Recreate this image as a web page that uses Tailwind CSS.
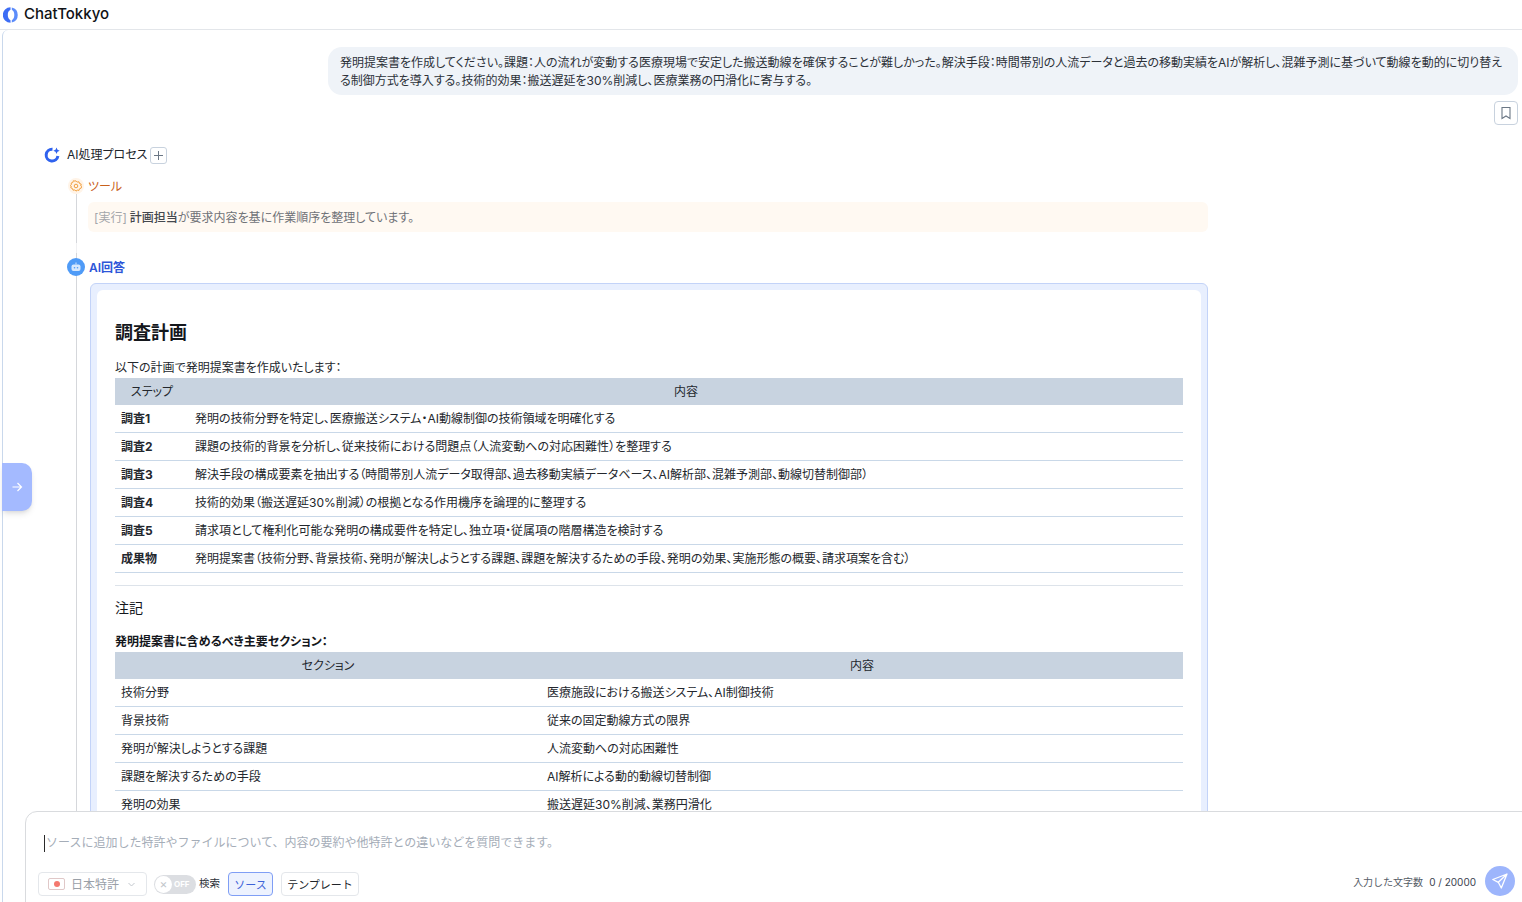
<!DOCTYPE html>
<html lang="ja">
<head>
    <meta charset="UTF-8">
    <meta name="viewport" content="width=device-width, initial-scale=1.0">
    <title>ChatTokkyo</title>
    <script src="https://cdn.jsdelivr.net/npm/@tailwindcss/browser@4"></script>
</head>
<body class="font-['Inter','Noto_Sans_CJK_JP',sans-serif] text-[#1f2329] bg-white">
    <div class="relative w-[1522px] h-[902px] overflow-hidden flex flex-col">
        <!-- Header -->
        <header class="h-[30px] shrink-0 border-b border-[#e3e6ea] flex items-center pl-[3px] gap-[5px]">
            <svg width="16" height="16" viewBox="0 0 16 16" fill="none">
                <path d="M7.500 .3A7.700 7.700 0 0 0 7.500 15.700L7.500 13.200C5.500 12.300 4.800 10.200 4.800 8S5.500 3.700 7.500 2.800Z" fill="#3d6df5"/>
                <path d="M8.800 .5A7.700 7.700 0 0 1 8.800 15.500L8.800 13.200C10.600 12.300 11.300 10.200 11.300 8S10.600 3.700 8.800 2.800Z" fill="#5c8cfa"/>
            </svg>
            <span class="-mt-[1px] text-[15px] font-['Inter'] font-medium text-[#0f1216]">ChatTokkyo</span>
        </header>

        <!-- Main -->
        <main class="flex-1 min-h-0 ml-[2px] border-l border-[#c9d8ec] rounded-tl-md pr-[4px] pt-[17px] [font-feature-settings:'palt'] overflow-hidden">
            <!-- User message -->
            <div class="flex justify-end">
                <div class="w-[1190px] h-[48px] bg-[#eff3f8] rounded-[14px] px-3 pt-[7px] text-xs leading-[18px] text-[#2c3138]">
                    発明提案書を作成してください。課題：人の流れが変動する医療現場で安定した搬送動線を確保することが難しかった。解決手段：時間帯別の人流データと過去の移動実績をAIが解析し、混雑予測に基づいて動線を動的に切り替える制御方式を導入する。技術的効果：搬送遅延を30%削減し、医療業務の円滑化に寄与する。
                </div>
            </div>
            <div class="flex justify-end mt-[6px]">
                <button class="w-6 h-6 border border-[#c8d2de] rounded flex items-center justify-center">
                    <svg width="14" height="14" viewBox="0 0 14 14" fill="none" stroke="#6b7785" stroke-width="1.100"><path d="M3 1.500h8v11L7 10l-4 2.500z"/></svg>
                </button>
            </div>

            <!-- AI process -->
            <div class="ml-[41px] mt-[19px] flex items-center h-[22px]">
                <svg width="16" height="16" viewBox="0 0 16 16" fill="none">
                    <path d="M8.500 2.200A5.900 5.900 0 1 0 13.900 9" stroke="#2f62ee" stroke-width="3"/>
                    <path d="M12.500 .5l1 2.200 2.200 1-2.200 1-1 2.200-1-2.200-2.200-1 2.200-1z" fill="#2f62ee"/>
                </svg>
                <span class="ml-[7px] text-xs text-[#20242a]">AI処理プロセス</span>
                <span class="ml-[3px] w-[17px] h-[17px] border border-[#c8d2de] rounded-[3px] flex items-center justify-center">
                    <svg width="11" height="11" viewBox="0 0 11 11" stroke="#6b7785" stroke-width="1"><path d="M5.500 1v9M1 5.500h9"/></svg>
                </span>
            </div>

            <!-- Timeline -->
            <div class="ml-[64px] mt-[12px] relative">
                <div class="absolute left-[9px] top-[16px] w-px h-[49px] bg-[#d5d7db]"></div>
                <div class="absolute left-[9px] top-[65px] w-px h-[10px] bg-[#f0f0f2]"></div>
                <div class="absolute left-[9px] top-[75px] w-px h-[600px] bg-[#d5d7db]"></div>

                <div class="relative flex items-center h-4 gap-1">
                    <span class="ml-[1px] w-4 h-4 rounded-full bg-[#fff4e8] flex items-center justify-center">
                        <svg width="12" height="12" viewBox="0 0 12 12" fill="none" stroke="#f0a040" stroke-width="1" stroke-linejoin="round"><path d="M6 .8l1.200 1.300 1.800-.3.500 1.700 1.700.6-.4 1.900 1.100 1-1.100 1 .4 0-1.700.8-.5 1.600-1.800-.3L6 11.200l-1.200-1.300-1.800.3-.5-1.600-1.700-.8.400-1.800-.8-.5 1.100-1.300-.4-1.100 1.700-.6.500-1.700 1.800.3z"/><circle cx="6" cy="6" r="1.800"/></svg>
                    </span>
                    <span class="pt-[2px] text-xs text-[#c8601c]">ツール</span>
                </div>
                <div class="relative ml-[21px] mt-[8px] w-[1120px] h-[30px] bg-[#fff9f2] rounded-md px-[6px] pt-[2px] flex items-center text-xs text-[#6f7277]">
                    <span class="text-[#a3a6aa] mr-[3px]">[実行]</span><span class="text-[#44484e] font-medium">計画担当</span>が要求内容を基に作業順序を整理しています。
                </div>

                <div class="relative flex items-center h-[18px] mt-[26px] gap-[4px]">
                    <span class="w-[18px] h-[18px] rounded-full bg-[#4f9bf7] flex items-center justify-center">
                        <svg width="12" height="12" viewBox="0 0 12 12" fill="none"><rect x="1.500" y="3.500" width="9" height="6.500" rx="2" fill="#d7e8fd"/><circle cx="4.500" cy="6.700" r=".8" fill="#4f9bf7"/><circle cx="7.500" cy="6.700" r=".8" fill="#4f9bf7"/><path d="M6 1.500v2" stroke="#d7e8fd"/></svg>
                    </span>
                    <span class="pt-[1px] text-xs font-semibold text-[#2c55d8]">AI回答</span>
                </div>

                <!-- Answer card -->
                <div class="relative ml-[23px] mt-[7px] w-[1118px] border border-[#c3d3f8] bg-[#e8effe] rounded-md p-[6px]">
                    <div class="bg-white rounded-md px-[18px] pt-[29px] pb-6 text-xs text-[#23272d]">
                        <h2 class="text-[18px] leading-[27px] font-bold text-[#14171c]">調査計画</h2>
                        <p class="mt-[12px] leading-[20px] h-[20px]">以下の計画で発明提案書を作成いたします：</p>

                        <table class="w-full table-fixed border-separate border-spacing-0 [&_td]:border-b [&_td]:border-[#c9d8e8] [&_td]:px-[6px]">
                            <colgroup><col class="w-[74px]"><col></colgroup>
                            <thead>
                                <tr class="bg-[#c8d3e0] h-[27px]">
                                    <th class="font-normal">ステップ</th>
                                    <th class="font-normal">内容</th>
                                </tr>
                            </thead>
                            <tbody>
                                <tr class="h-[28px]"><td class="font-bold">調査1</td><td>発明の技術分野を特定し、医療搬送システム・AI動線制御の技術領域を明確化する</td></tr>
                                <tr class="h-[28px]"><td class="font-bold">調査2</td><td>課題の技術的背景を分析し、従来技術における問題点（人流変動への対応困難性）を整理する</td></tr>
                                <tr class="h-[28px]"><td class="font-bold">調査3</td><td>解決手段の構成要素を抽出する（時間帯別人流データ取得部、過去移動実績データベース、AI解析部、混雑予測部、動線切替制御部）</td></tr>
                                <tr class="h-[28px]"><td class="font-bold">調査4</td><td>技術的効果（搬送遅延30%削減）の根拠となる作用機序を論理的に整理する</td></tr>
                                <tr class="h-[28px]"><td class="font-bold">調査5</td><td>請求項として権利化可能な発明の構成要件を特定し、独立項・従属項の階層構造を検討する</td></tr>
                                <tr class="h-[28px]"><td class="font-bold">成果物</td><td>発明提案書（技術分野、背景技術、発明が解決しようとする課題、課題を解決するための手段、発明の効果、実施形態の概要、請求項案を含む）</td></tr>
                            </tbody>
                        </table>

                        <hr class="mt-[12px] border-[#dde3ea]">
                        <h3 class="mt-[11px] text-sm leading-[21px] font-normal text-[#14171c]">注記</h3>
                        <p class="mt-[15px] h-[19px] leading-[18px] font-bold text-[#14171c]">発明提案書に含めるべき主要セクション：</p>

                        <table class="w-full table-fixed border-separate border-spacing-0 [&_td]:border-b [&_td]:border-[#c9d8e8] [&_td]:px-[6px]">
                            <colgroup><col class="w-[426px]"><col></colgroup>
                            <thead>
                                <tr class="bg-[#c8d3e0] h-[27px]">
                                    <th class="font-normal">セクション</th>
                                    <th class="font-normal">内容</th>
                                </tr>
                            </thead>
                            <tbody>
                                <tr class="h-[28px]"><td>技術分野</td><td>医療施設における搬送システム、AI制御技術</td></tr>
                                <tr class="h-[28px]"><td>背景技術</td><td>従来の固定動線方式の限界</td></tr>
                                <tr class="h-[28px]"><td>発明が解決しようとする課題</td><td>人流変動への対応困難性</td></tr>
                                <tr class="h-[28px]"><td>課題を解決するための手段</td><td>AI解析による動的動線切替制御</td></tr>
                                <tr class="h-[28px]"><td>発明の効果</td><td>搬送遅延30%削減、業務円滑化</td></tr>
                            </tbody>
                        </table>
                    </div>
                </div>
            </div>
        </main>

        <!-- Sidebar toggle -->
        <button class="absolute left-[2px] top-[463px] w-[30px] h-12 bg-[#a4baff] rounded-r-[10px] shadow-md flex items-center justify-center">
            <svg width="12" height="12" viewBox="0 0 12 12" fill="none" stroke="#fff" stroke-width="1.200"><path d="M1.500 6h9M6.500 2l4 4-4 4"/></svg>
        </button>

        <!-- Input panel -->
        <div class="absolute left-[25px] top-[811px] w-[1510px] h-[100px] bg-white border border-[#d9dbde] rounded-t-xl pl-[12px] pr-[20px] [font-feature-settings:'normal']">
            <div class="mt-[22px] h-[18px] flex items-center text-xs text-[#a5adb8]">
                <span class="w-px h-[17px] bg-[#2a2a2a] mr-[1px] ml-[6px]"></span>ソースに追加した特許やファイルについて、内容の要約や他特許との違いなどを質問できます。
            </div>
            <div class="mt-[20px] w-[1477px] flex items-center">
                <div class="w-[109px] h-6 border border-[#e4e7eb] rounded flex items-center pl-[9px] text-xs text-[#9aa0a8]">
                    <span class="w-[17px] h-3 border border-[#e0c8c8] rounded-[2px] flex items-center justify-center"><span class="w-[6px] h-[6px] rounded-full bg-[#f4796f]"></span></span>
                    <span class="ml-[6px] pt-[2px]">日本特許</span>
                    <svg class="ml-[8px]" width="9" height="9" viewBox="0 0 9 9" fill="none" stroke="#c3c8ce"><path d="M1.500 3l3 3 3-3"/></svg>
                </div>
                <div class="ml-[7px] w-[42px] h-[19px] rounded-full bg-[#dcdee2] flex items-center pl-[1px]">
                    <span class="w-[17px] h-[17px] rounded-full bg-white flex items-center justify-center text-[12px] text-[#c3c7cc]">×</span>
                    <span class="ml-[2px] text-[8px] font-bold text-white">OFF</span>
                </div>
                <span class="ml-[3px] text-[10.5px] text-[#2c3138]">検索</span>
                <span class="ml-2 w-[45px] h-6 border border-[#7f9ef5] bg-[#edf2fe] rounded flex items-center justify-center pt-[2px] text-[11px] text-[#3e63d8]">ソース</span>
                <span class="ml-2 w-[78px] h-6 border border-[#e4e7eb] rounded flex items-center justify-center pt-[2px] text-[11px] text-[#20242a]">テンプレート</span>
                <span class="ml-auto -mt-[3px] text-[10px] text-[#555c66]">入力した文字数</span>
                <span class="ml-[6px] -mt-[3px] text-[10px] text-[#3b4350]">0 / 20000</span>
                <span class="ml-[9px] w-[30px] h-[30px] -mt-[6px] rounded-full bg-[#9db5fc] flex items-center justify-center">
                    <svg width="18" height="18" viewBox="0 0 18 18" fill="none" stroke="#fff" stroke-width="1.300" stroke-linejoin="round"><path d="M16 2L1.800 7.500l5.500 2.800 3 5.700zM16 2L7.300 10.300"/></svg>
                </span>
            </div>
        </div>
    </div>
</body>
</html>
